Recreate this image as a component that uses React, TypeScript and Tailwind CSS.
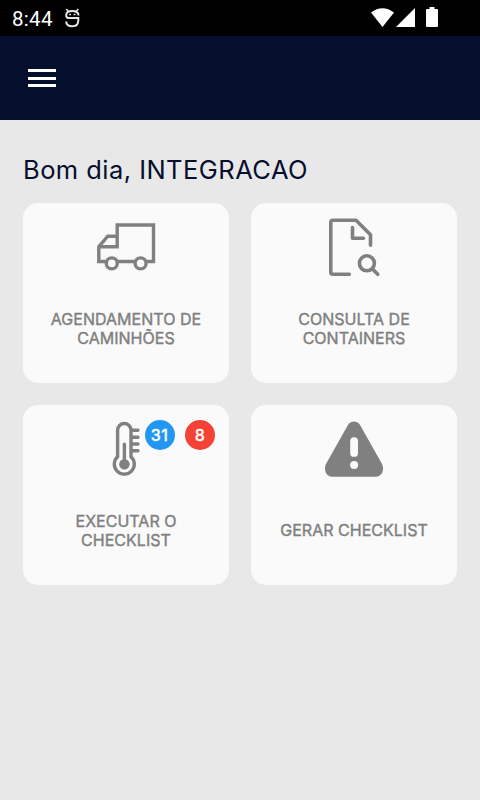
import type { ReactNode } from "react";

function StatusBar() {
  return (
    <div className="flex h-9 items-center bg-black pl-3 text-white">
      <span className="w-[42px] whitespace-nowrap pt-px font-[Roboto,sans-serif] text-[20.5px] leading-9 tracking-[0.3px]">8:44</span>
      <svg className="ml-[10px]" width="18" height="20" viewBox="64 8 18 20" fill="none" stroke="#e8e8e8" strokeWidth="2">
        <path d="M78.500 15.500C78.500 12 76.300 11 72.300 11S66.200 12 66.200 15.200C66.200 17.300 67 18 68.500 18H78.300V20.500C78.300 24.500 76.300 26.300 72.300 26.300S66.200 24.500 66.200 21.500" />
        <path d="M66.300 9l2 2.200M78.300 9l-2 2.200" strokeWidth="1.500" />
        <path d="M69.200 14.500h1.800M73.700 14.500h1.800" strokeWidth="1.700" />
      </svg>
      <svg className="ml-auto mr-[41px]" width="68" height="22" viewBox="371 7 68 22" fill="white">
        <path d="M371 12.600Q382.500 3.800 394 12.600L382.500 27z" />
        <path d="M415 8v19h-19z" />
        <path d="M429.500 7h5v2h2.500q1 0 1 1v16q0 1-1 1h-10q-1 0-1-1V10q0-1 1-1h2.500z" />
      </svg>
    </div>
  );
}

function TruckIcon() {
  return (
    <svg width="60" height="50" viewBox="96 222 60 50" fill="none" stroke="#808080" strokeWidth="3.400">
      <path d="M105.500 261.500H98.800V246.700L107.800 236.200H117M98.800 246.700H117.200V225H153.500V261.500H147M118 261.500h16.500" />
      <circle cx="111.800" cy="263.400" r="5.500" />
      <circle cx="140.600" cy="263.400" r="5.500" />
    </svg>
  );
}

function FileSearchIcon() {
  return (
    <svg width="52" height="60" viewBox="328 217 52 60" fill="none" stroke="#808080" strokeWidth="3.600" strokeLinecap="round" strokeLinejoin="round">
      <path d="M349.300 274.200H332.800Q330.800 274.200 330.800 272.200V222.300Q330.800 220.300 332.800 220.300H356L370.500 234.800V245.300" />
      <path d="M352.500 227.500V238.300H363.500" />
      <circle cx="366.900" cy="263.300" r="7.500" />
      <path d="M372.500 269l5.200 5.300" />
    </svg>
  );
}

function ThermometerIcon() {
  return (
    <svg width="30" height="58" viewBox="111 420 30 58" fill="none" stroke="#808080" strokeWidth="3.400" strokeLinecap="round">
      <path d="M117.600 456.800V430.200a6.700 6.700 0 0 1 13.400 0V456.800a10 10 0 1 1-13.400 0z" />
      <path d="M131.500 430.300h6.500M131.500 437.200h6.500M131.500 444h6.500M131.500 450.800h6.500M124.400 444.300v18" />
      <circle cx="124.400" cy="464.300" r="5.200" fill="#808080" stroke="none" />
    </svg>
  );
}

function WarningIcon() {
  return (
    <svg width="60" height="58" viewBox="324 420 60 58">
      <path d="M347.800 425.200Q350 421.500 354 421.500T360.200 425.200L382.300 464.500Q384 468.500 382.600 472Q380.500 476.700 375.500 476.700H332.500Q327.500 476.700 325.500 472Q324 468.500 325.700 464.500z" fill="#808080" />
      <rect x="350.200" y="437.300" width="7.800" height="19.500" rx="3.900" fill="#fafafa" />
      <circle cx="354.100" cy="465" r="4" fill="#fafafa" />
    </svg>
  );
}

function Card({ icon, label, badges }: { icon: ReactNode; label: ReactNode; badges?: ReactNode }) {
  return (
    <button className="relative flex h-[180px] flex-col items-center rounded-[15px] bg-[#fafafa] pt-[14px]">
      <span className="flex h-[60px] items-center">{icon}</span>
      <span className="flex h-[103px] items-center text-center text-[16px] font-normal leading-[19px] tracking-[0.020px] text-[#808080] [-webkit-text-stroke:0.400px_#808080]">
        <span>{label}</span>
      </span>
      {badges}
    </button>
  );
}

export default function App() {
  return (
    <div className="flex h-[800px] w-[480px] flex-col overflow-hidden bg-[#e8e8e8] font-[Inter,sans-serif]">
      <StatusBar />
      <header className="flex h-[84px] items-center bg-[#050e2d] pl-7">
        <button aria-label="Menu" className="flex w-[28px] flex-col gap-[4.500px]">
          <span className="h-[3px] bg-white" />
          <span className="h-[3px] bg-white" />
          <span className="h-[3px] bg-white" />
        </button>
      </header>
      <main className="px-[23px] pt-[34px]">
        <h1 className="h-[49px] whitespace-nowrap text-[25.500px] font-normal leading-[32px] tracking-[0.450px] text-[#050e2d]">Bom dia, INTEGRACAO</h1>
        <div className="grid grid-cols-2 gap-[22px]">
          <Card icon={<TruckIcon />} label={<>AGENDAMENTO DE<br />CAMINHÕES</>} />
          <Card icon={<FileSearchIcon />} label={<>CONSULTA DE<br />CONTAINERS</>} />
          <Card
            icon={<ThermometerIcon />}
            label={<>EXECUTAR O<br />CHECKLIST</>}
            badges={
              <span className="absolute right-[14px] top-[15px] flex gap-[10.500px] text-[16px] font-medium tracking-[0.500px] text-white [-webkit-text-stroke:0.300px_white]">
                <span className="flex size-[30px] items-center justify-center rounded-full bg-[#2196f3]">31</span>
                <span className="flex size-[30px] items-center justify-center rounded-full bg-[#f44336]">8</span>
              </span>
            }
          />
          <Card icon={<WarningIcon />} label="GERAR CHECKLIST" />
        </div>
      </main>
    </div>
  );
}
